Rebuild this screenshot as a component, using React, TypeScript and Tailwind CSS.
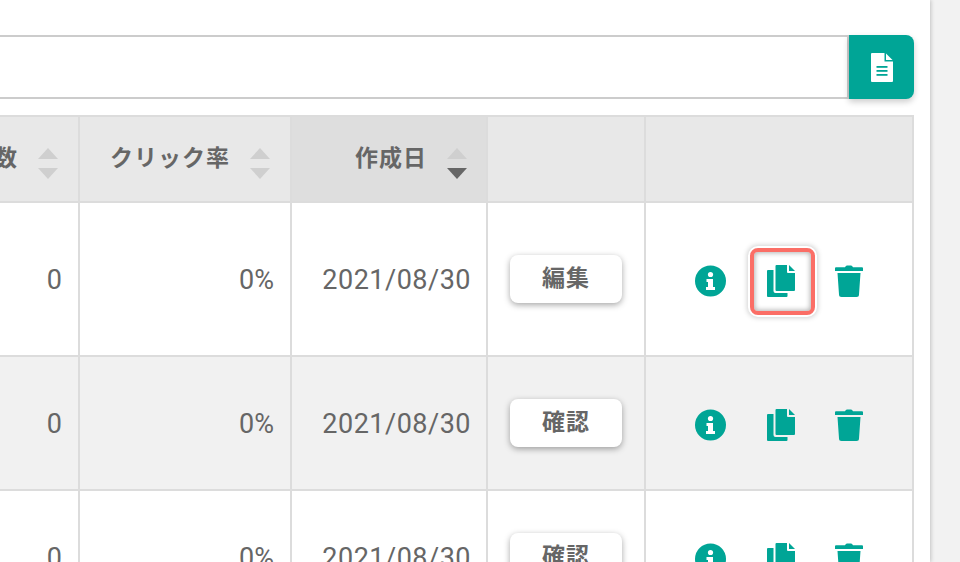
const rows = [
  { label: "編集", bg: "bg-white", height: "h-[154px]", highlight: true },
  { label: "確認", bg: "bg-[#f1f1f1]", height: "h-[134px]", highlight: false },
  { label: "確認", bg: "bg-white", height: "h-[134px]", highlight: false },
];

const gridCols = "grid grid-cols-[80px_212px_196px_158px_268px]";

function SortArrows({ active }: { active?: boolean }) {
  return (
    <svg width="20" height="31" viewBox="0 0 20 31" className="shrink-0 mt-[10px]">
      <polygon points="10,0 20,11 0,11" fill="#cfcfcf" />
      <polygon points="0,20 20,20 10,31" fill={active ? "#666666" : "#cfcfcf"} />
    </svg>
  );
}

function InfoIcon() {
  return (
    <svg width="31" height="32" viewBox="0 0 31 32" className="shrink-0">
      <circle cx="15.5" cy="16" r="15.5" fill="#00a596" />
      <circle cx="15.5" cy="9.5" r="2.6" fill="#fff" />
      <path d="M11.5 14h6.5v8h2v3h-9v-3h2v-5h-1.500z" fill="#fff" />
    </svg>
  );
}

function CopyIcon() {
  return (
    <svg width="28" height="32" viewBox="0 0 28 32" className="shrink-0">
      <path d="M1 5h5.500v21a2 2 0 0 0 2 2h12v3a1 1 0 0 1-1 1H1a1 1 0 0 1-1-1V6a1 1 0 0 1 1-1z" fill="#00a596" />
      <path d="M8.500 1a1 1 0 0 1 1-1H20v7a1 1 0 0 0 1 1h7v17a1 1 0 0 1-1 1H9.500a1 1 0 0 1-1-1z" fill="#00a596" />
      <path d="M22 0l6 6h-6z" fill="#00a596" />
    </svg>
  );
}

function TrashIcon() {
  return (
    <svg width="28" height="32" viewBox="0 0 28 32" className="shrink-0">
      <path d="M10 2.200C10.500 1 11.500 0.500 12.500 0.500h3c1 0 2 0.500 2.500 1.700h9a1 1 0 0 1 1 1V6H0V3.200a1 1 0 0 1 1-1z" fill="#00a596" />
      <path d="M2.500 8h23L24 29.500A2.500 2.500 0 0 1 21.500 32h-15A2.500 2.500 0 0 1 4 29.500z" fill="#00a596" />
    </svg>
  );
}

function DocIcon() {
  return (
    <svg width="22" height="29" viewBox="0 0 22 29">
      <path d="M1 0h12.500v8.500H22V28a1 1 0 0 1-1 1H1a1 1 0 0 1-1-1V1a1 1 0 0 1 1-1z" fill="#fff" />
      <path d="M15 0.500L21.500 7H15z" fill="#fff" />
      <rect x="5.500" y="13" width="11" height="1.800" fill="#00a596" />
      <rect x="5.500" y="17" width="11" height="1.800" fill="#00a596" />
      <rect x="5.500" y="21" width="11" height="1.800" fill="#00a596" />
    </svg>
  );
}

export default function App() {
  return (
    <div className="h-[562px] w-[960px] overflow-hidden bg-[#f2f2f2] font-['Roboto','Noto_Sans_CJK_JP',sans-serif] text-[#666666]">
      <div className="h-full w-[930px] bg-white shadow-[1px_0_4px_rgba(0,0,0,0.2)] pt-[35px]">
        <div className="flex w-[914px] h-[64px]">
          <div className="flex-1 border-y-2 border-r-2 border-[#cccccc] bg-white" />
          <button className="flex w-[65px] items-center justify-center rounded-r-lg bg-[#00a596] shadow-[0_3px_6px_rgba(0,0,0,0.2)]">
            <DocIcon />
          </button>
        </div>

        <div className="mt-4 w-[914px]">
          <div className={`${gridCols} h-[88px] border-y-2 border-[#dcdcdc] bg-[#e8e8e8] text-[23px] font-bold tracking-[1px]`}>
            <div className="flex items-start justify-end gap-5 overflow-hidden whitespace-nowrap border-r-2 border-[#dcdcdc] pr-5 pt-[21px]">
              <span className="mt-px leading-[40px]">表示数</span>
              <SortArrows />
            </div>
            <div className="flex items-start justify-end gap-5 whitespace-nowrap border-r-2 border-[#dcdcdc] pr-5 pt-[21px]">
              <span className="mt-px leading-[40px]">クリック率</span>
              <SortArrows />
            </div>
            <div className="flex items-start justify-end gap-5 whitespace-nowrap border-r-2 border-[#dcdcdc] bg-[#dedede] pr-[19px] pt-[21px]">
              <span className="mt-px leading-[40px]">作成日</span>
              <SortArrows active />
            </div>
            <div className="border-r-2 border-[#dcdcdc]" />
            <div className="border-r-2 border-[#dcdcdc]" />
          </div>

          {rows.map((row, i) => (
            <div key={i} className={`${gridCols} ${row.height} border-b-2 border-[#dcdcdc] ${row.bg} text-[27px]`}>
              <div className="flex items-center justify-end border-r-2 border-[#dcdcdc] pr-4 pt-[2px]">0</div>
              <div className="flex items-center justify-end border-r-2 border-[#dcdcdc] pr-4 pt-[2px]">0%</div>
              <div className="flex items-center justify-end border-r-2 border-[#dcdcdc] pr-[15px] pt-[2px] tracking-[0.5px]">2021/08/30</div>
              <div className="flex items-center justify-center border-r-2 border-[#dcdcdc]">
                <button className="h-12 w-[112px] rounded-lg bg-white text-[23px] font-bold tracking-[1px] text-[#666666] shadow-[0_2px_6px_rgba(0,0,0,0.35)]">
                  {row.label}
                </button>
              </div>
              <div className="flex items-center border-r-2 border-[#dcdcdc] pl-[49px] pt-1">
                <InfoIcon />
                <div className="relative ml-[41px] flex">
                  <CopyIcon />
                  {row.highlight && (
                    <div className="absolute -left-[17px] -top-[17px] h-[67px] w-[65px] rounded-lg border-[4px] border-[#fb6e66] shadow-[0_0_0_2px_#fff,0_0_5px_3px_rgba(0,0,0,0.18),inset_0_0_5px_1px_rgba(0,0,0,0.3)]" />
                  )}
                </div>
                <div className="ml-10 flex">
                  <TrashIcon />
                </div>
              </div>
            </div>
          ))}
        </div>
      </div>
    </div>
  );
}
